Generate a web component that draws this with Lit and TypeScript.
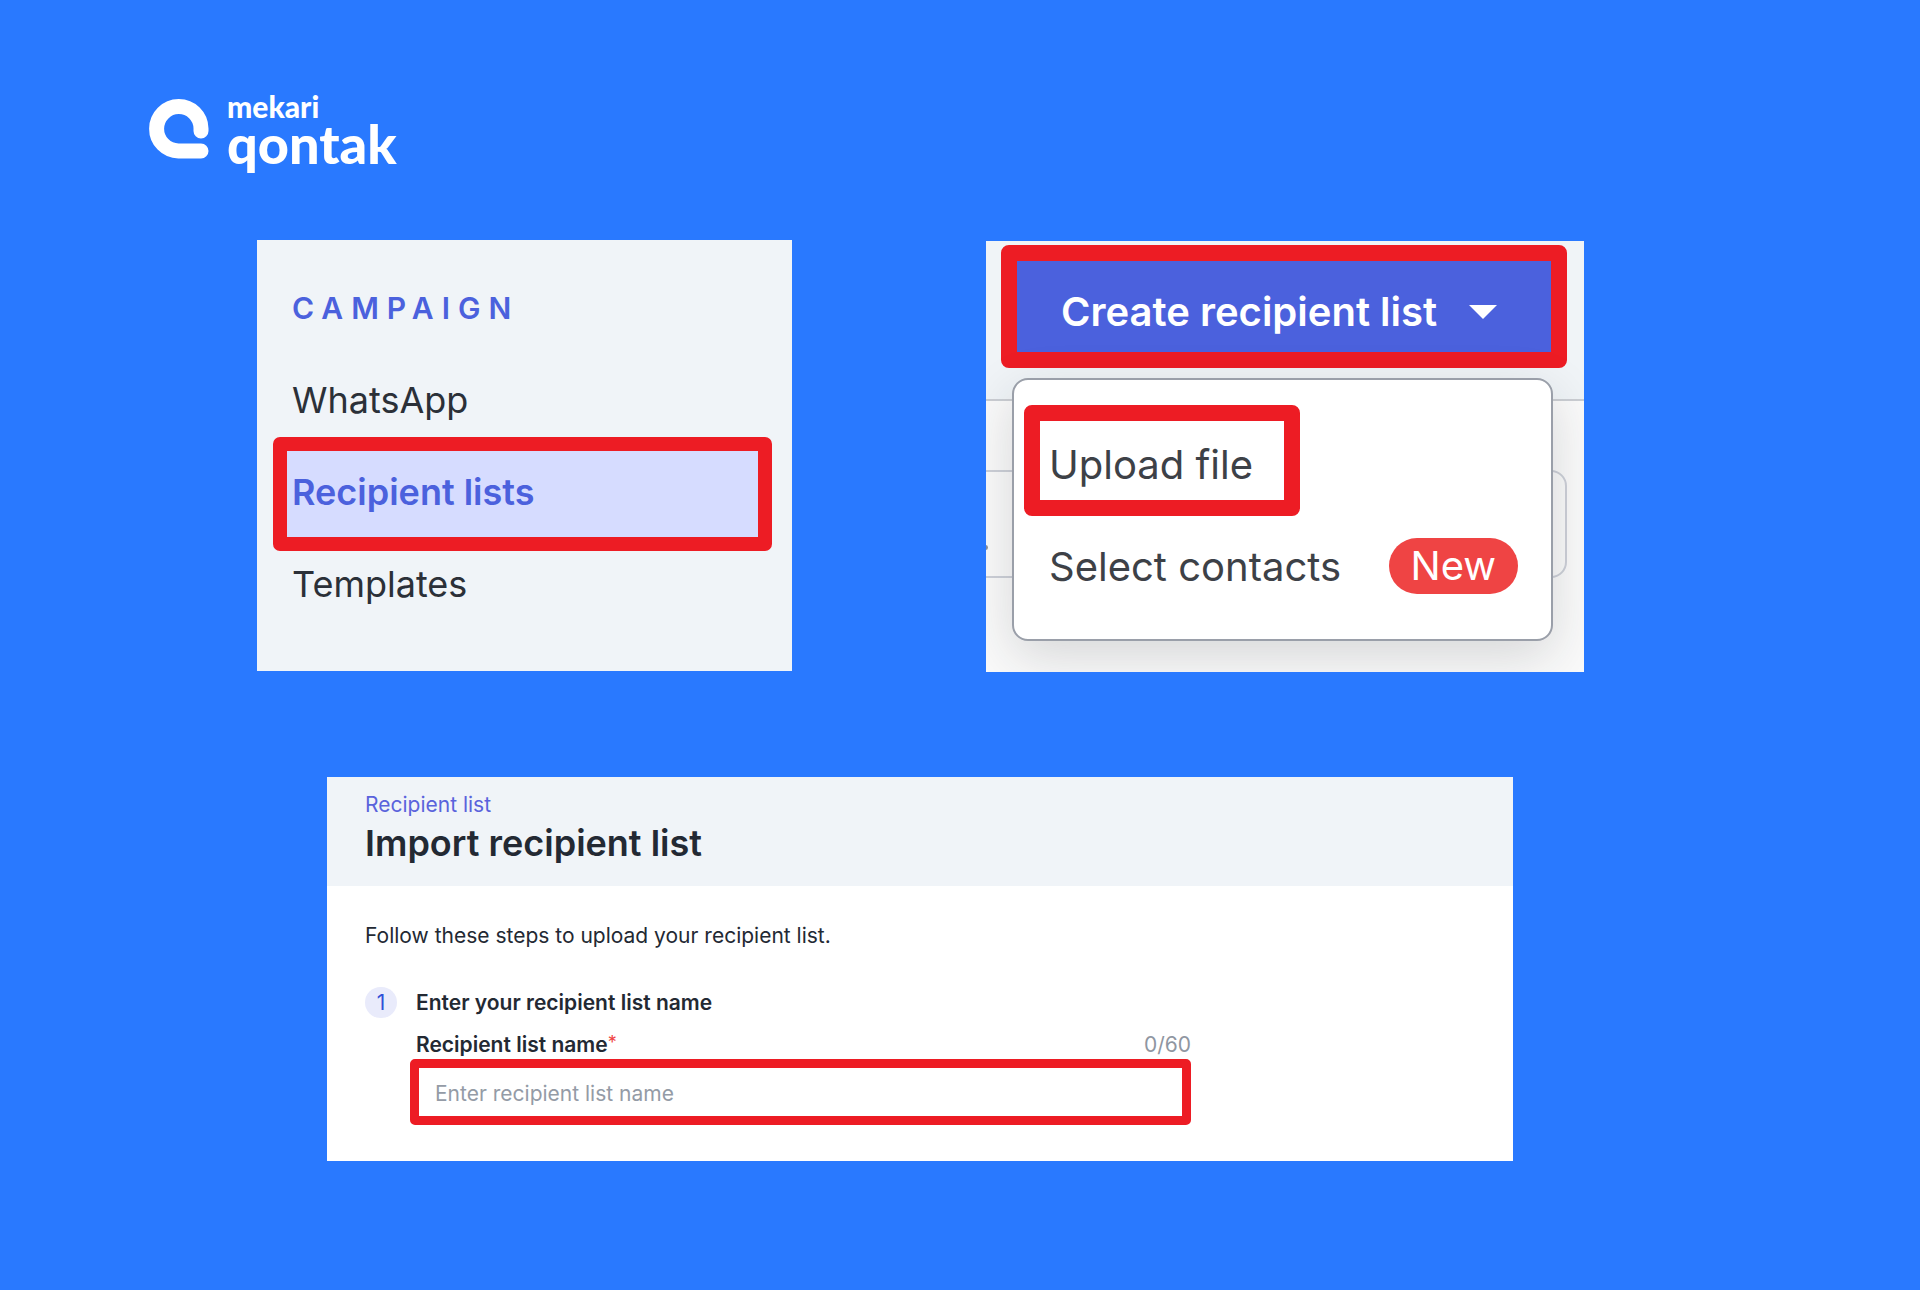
import { LitElement, html, css } from "lit";
import { customElement } from "lit/decorators.js";

/** Brand mark with the two-line product name. */
@customElement("brand-logo")
export class BrandLogo extends LitElement {
  static styles = css`
    :host {
      display: block;
    }
    .brand {
      display: flex;
      align-items: flex-start;
      gap: 18px;
      color: #fff;
      text-decoration: none;
      font-family: Lato, "Liberation Sans", sans-serif;
    }
    .mark {
      width: 60px;
      height: 60px;
      margin-top: 12px;
      flex: none;
    }
    .name {
      display: flex;
      flex-direction: column;
      font-weight: 900;
    }
    .company {
      font-size: 30px;
      line-height: 38px;
    }
    .product {
      font-size: 54px;
      line-height: 38px;
    }
  `;

  render() {
    return html`
      <a class="brand" href="#" aria-label="mekari qontak">
        <svg class="mark" viewBox="0 0 60 60" fill="none" aria-hidden="true">
          <path
            d="M52 32V29.500A22.200 22.200 0 1 0 29.500 52H52"
            stroke="#fff"
            stroke-width="15"
            stroke-linecap="round"
            stroke-linejoin="round"
          />
        </svg>
        <span class="name">
          <span class="company">mekari</span>
          <span class="product">qontak</span>
        </span>
      </a>
    `;
  }
}

/** Sidebar section with the campaign links. */
@customElement("campaign-nav")
export class CampaignNav extends LitElement {
  static styles = css`
    :host {
      display: block;
      background: #f0f4f8;
      padding: 22px 0 41px;
      box-sizing: border-box;
    }
    .title {
      margin: 0;
      padding-left: 35px;
      font-size: 30px;
      line-height: 92px;
      font-weight: 600;
      letter-spacing: 8px;
      color: #4b61dd;
    }
    .links {
      margin: 0;
      padding: 0;
      list-style: none;
      isolation: isolate;
    }
    .link {
      display: block;
      position: relative;
      padding-left: 35px;
      font-size: 36px;
      line-height: 92px;
      color: #2b3038;
      text-decoration: none;
    }
    .link.current {
      font-weight: 600;
      color: #4b61dd;
    }
    .link.current::before {
      content: "";
      position: absolute;
      z-index: -1;
      inset: -9px 20px -13px 16px;
      background: #d6dcff;
      border: 14px solid #ed1c24;
      border-radius: 7px;
    }
  `;

  private links = ["WhatsApp", "Recipient lists", "Templates"];
  private current = "Recipient lists";

  render() {
    return html`
      <h2 class="title">CAMPAIGN</h2>
      <nav>
        <ul class="links">
          ${this.links.map(
            (name) => html`<li>
              <a class="link ${name === this.current ? "current" : ""}" href="#">${name}</a>
            </li>`
          )}
        </ul>
      </nav>
    `;
  }
}

/** Split button with its open menu. */
@customElement("create-menu")
export class CreateMenu extends LitElement {
  static styles = css`
    :host {
      display: block;
      position: relative;
      isolation: isolate;
      overflow: hidden;
      box-sizing: border-box;
      padding: 4px 17px 31px 15px;
      background: #fafafa;
    }
    .toolbar {
      position: absolute;
      z-index: -1;
      inset: 0 0 auto 0;
      height: 158px;
      background: #f0f4f7;
      border-bottom: 2px solid #cbced3;
    }
    .field {
      position: absolute;
      z-index: -1;
      top: 229px;
      left: -20px;
      right: 17px;
      height: 104px;
      background: #fafafa;
      border: 2px solid #cdd0d8;
      border-radius: 16px;
    }
    .dot {
      position: absolute;
      z-index: -1;
      top: 304px;
      left: -3px;
      width: 5px;
      height: 5px;
      border-radius: 50%;
      background: #8b909a;
    }
    button {
      font: inherit;
      text-align: left;
      cursor: pointer;
    }
    .create {
      display: flex;
      align-items: center;
      gap: 32px;
      width: 100%;
      height: 123px;
      padding: 10px 44px 0;
      border: 16px solid #ed1c24;
      border-radius: 8px;
      background: #4b61dd;
      color: #fff;
      font-size: 40px;
      font-weight: 600;
      white-space: nowrap;
    }
    .caret {
      width: 28px;
      height: 14px;
      flex: none;
    }
    .menu {
      margin: 10px 14px 0 11px;
      padding: 25px 10px 23px;
      border: 2px solid #9a9fa9;
      border-radius: 16px;
      background: #fff;
      box-shadow: 0 16px 52px rgba(30, 35, 45, 0.16);
      font-size: 40px;
      color: #3d4147;
    }
    .item {
      display: flex;
      align-items: center;
      justify-content: space-between;
      width: 100%;
      height: 100px;
      padding: 0 23px 0 25px;
      border: 0;
      background: none;
      color: inherit;
      white-space: nowrap;
    }
    .item.marked {
      width: auto;
      height: 111px;
      padding: 8px 31px 0 9px;
      border: 16px solid #ed1c24;
      border-radius: 8px;
    }
    .badge {
      padding: 0 22px;
      border-radius: 28px;
      background: #ef4444;
      color: #fff;
      line-height: 56px;
    }
  `;

  render() {
    return html`
      <div class="toolbar"></div>
      <div class="field"></div>
      <div class="dot"></div>
      <button class="create" type="button" aria-haspopup="menu" aria-expanded="true">
        Create recipient list
        <svg class="caret" viewBox="0 0 28 14" aria-hidden="true">
          <path d="M0 0H28L14 14Z" fill="#fff" />
        </svg>
      </button>
      <div class="menu" role="menu">
        <button class="item marked" type="button" role="menuitem">Upload file</button>
        <button class="item" type="button" role="menuitem">
          Select contacts <span class="badge">New</span>
        </button>
      </div>
    `;
  }
}

/** First step of the recipient list import. */
@customElement("import-form")
export class ImportForm extends LitElement {
  static styles = css`
    :host {
      display: block;
      background: #fff;
      font-size: 21px;
      line-height: 30px;
      color: #232933;
    }
    .head {
      padding: 13px 38px 20px;
      background: #f0f4f8;
    }
    .crumb {
      display: block;
      color: #5a63dc;
      text-decoration: none;
    }
    .title {
      margin: 0;
      font-size: 36px;
      line-height: 46px;
      font-weight: 600;
    }
    .body {
      padding: 35px 38px 36px;
    }
    .intro {
      margin: 0 0 36px;
    }
    .step {
      display: grid;
      grid-template-columns: 32px minmax(0, 1fr);
      column-gap: 13px;
      row-gap: 12px;
      max-width: 826px;
    }
    .number {
      height: 31px;
      line-height: 31px;
      border-radius: 16px;
      background: #e9ebfb;
      color: #2f50d8;
      text-align: center;
    }
    .step-title {
      margin: 0;
      padding-left: 6px;
      font-size: inherit;
      line-height: 31px;
      font-weight: 600;
    }
    .field {
      grid-column: 2;
    }
    .label-row {
      display: flex;
      justify-content: space-between;
      padding-left: 6px;
      line-height: 29px;
    }
    .label {
      font-weight: 600;
    }
    .required {
      font-size: 18px;
      line-height: 16px;
      font-weight: 400;
      vertical-align: 3px;
      color: #ef4444;
    }
    .count {
      color: #8f96a1;
    }
    .input {
      display: block;
      box-sizing: border-box;
      width: 100%;
      height: 66px;
      padding: 2px 16px 0;
      border: 9px solid #ed1c24;
      border-radius: 5px;
      background: #fff;
      font: inherit;
      color: inherit;
      outline: none;
    }
    .input::placeholder {
      color: #949ba6;
      opacity: 1;
    }
  `;

  render() {
    return html`
      <header class="head">
        <a class="crumb" href="#">Recipient list</a>
        <h1 class="title">Import recipient list</h1>
      </header>
      <div class="body">
        <p class="intro">Follow these steps to upload your recipient list.</p>
        <div class="step">
          <span class="number">1</span>
          <h2 class="step-title">Enter your recipient list name</h2>
          <div class="field">
            <div class="label-row">
              <label class="label" for="list-name"
                >Recipient list name<span class="required">*</span></label
              >
              <span class="count">0/60</span>
            </div>
            <input
              class="input"
              id="list-name"
              type="text"
              maxlength="60"
              required
              placeholder="Enter recipient list name"
            />
          </div>
        </div>
      </div>
    `;
  }
}

@customElement("app-root")
export class AppRoot extends LitElement {
  static styles = css`
    :host {
      display: block;
      box-sizing: border-box;
      min-height: 100vh;
      padding: 87px 0 129px;
      background: #2979ff;
      font-family: Inter, "Liberation Sans", sans-serif;
    }
    .logo {
      width: fit-content;
      margin-left: 149px;
    }
    .content {
      display: flex;
      flex-direction: column;
      gap: 105px;
      margin: 77px 336px 0 257px;
    }
    .row {
      display: grid;
      grid-template-columns: 535fr 598fr;
      align-items: start;
      gap: 194px;
    }
    .create {
      margin-top: 1px;
    }
    .form {
      margin: 0 71px 0 70px;
    }
  `;

  render() {
    return html`
      <brand-logo class="logo"></brand-logo>
      <main class="content">
        <div class="row">
          <campaign-nav></campaign-nav>
          <create-menu class="create"></create-menu>
        </div>
        <import-form class="form"></import-form>
      </main>
    `;
  }
}
